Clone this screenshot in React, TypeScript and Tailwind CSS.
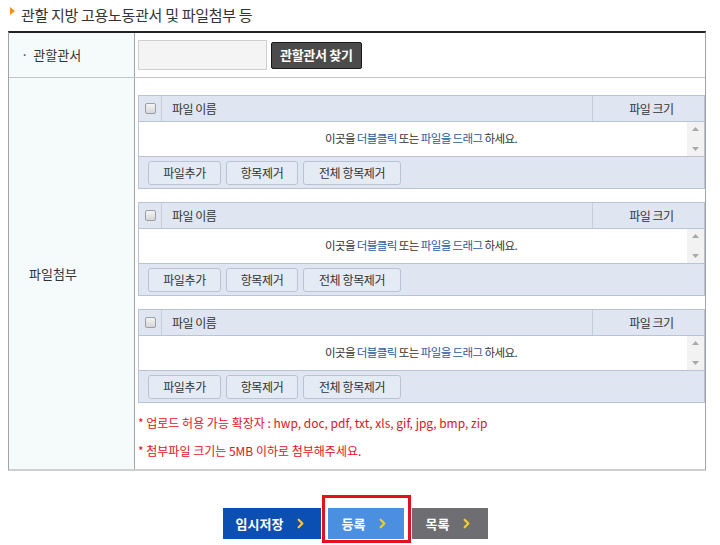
import { ChevronRight } from "lucide-react";

/* ── File box (header / drop area / toolbar) ── */
function FileBox() {
  return (
    <div className="border border-[#b8c4d6]">
      {/* header */}
      <div className="flex h-[26px] bg-[#dfe6f1] border-b border-[#b8c4d6] text-[12px] tracking-[-0.5px]">
        <div className="w-[23px] flex items-center justify-center border-r border-[#c3cddb]">
          <span className="block w-[11px] h-[11px] rounded-[2px] border border-[#9aa0a8] bg-gradient-to-b from-[#f4f4f4] to-[#d6d6d6]" />
        </div>
        <div className="flex-1 flex items-center pl-[10px]">파일 이름</div>
        <div className="w-[112px] flex items-center justify-center border-l border-[#c3cddb] pl-[6px]">파일 크기</div>
      </div>

      {/* drop area */}
      <div className="flex h-[35px] bg-white border-b border-[#b8c4d6]">
        <div className="flex-1 flex items-center justify-center text-[11.5px] tracking-[-0.6px] pl-[16px]">
          이곳을&nbsp;<span className="text-[#1f5aa6]">더블클릭</span>&nbsp;또는&nbsp;
          <span className="text-[#1f5aa6]">파일을 드래그</span>&nbsp;하세요.
        </div>
        <div className="w-[17px] bg-[#f2f2f2] flex flex-col items-center justify-between py-[5px] text-[#a8a8a8]">
          <svg width="7" height="4" viewBox="0 0 7 4"><path d="M0 4 L3.5 0 L7 4 Z" fill="currentColor" /></svg>
          <svg width="7" height="4" viewBox="0 0 7 4"><path d="M0 0 L3.5 4 L7 0 Z" fill="currentColor" /></svg>
        </div>
      </div>

      {/* toolbar */}
      <div className="flex h-[31px] items-center gap-[5px] pl-[9px] bg-[#dfe6f1] text-[12px] tracking-[-0.4px]">
        <button className="h-[24px] w-[73px] rounded-[3px] border border-[#b8c4d6] bg-[#e5ebf4]">파일추가</button>
        <button className="h-[24px] w-[72px] rounded-[3px] border border-[#b8c4d6] bg-[#e5ebf4]">항목제거</button>
        <button className="h-[24px] w-[98px] rounded-[3px] border border-[#b8c4d6] bg-[#e5ebf4]">전체 항목제거</button>
      </div>
    </div>
  );
}

/* ── Bottom action button ── */
function ActionButton({ label, className }: { label: string; className: string }) {
  return (
    <button className={`h-[31px] flex items-center justify-center gap-[10px] text-white font-bold text-[13px] ${className}`}>
      <span>{label}</span>
      <ChevronRight size={15} strokeWidth={3.5} className="text-[#f3c940]" />
    </button>
  );
}

export default function App() {
  return (
    <div className="w-[720px] h-[545px] bg-white text-[#333] font-['Noto_Sans_CJK_KR','Noto_Sans',sans-serif] overflow-hidden">
      {/* title */}
      <div className="flex items-center h-[31px] pl-[10px] pb-[1px]">
        <svg width="5" height="8" viewBox="0 0 5 8" className="mb-[8px] mr-[6px]">
          <path d="M0 0 L5 4 L0 8 Z" fill="#f0901e" />
        </svg>
        <h2 className="text-[15px] leading-none tracking-[-0.3px] mb-[2px]">관할 지방 고용노동관서 및 파일첨부 등</h2>
      </div>

      {/* form table */}
      <div className="ml-[8px] w-[698px] border-t-2 border-t-[#222] border-x border-x-[#a3a3a3] border-b-2 border-b-[#cfcfcf]">
        {/* row: 관할관서 */}
        <div className="flex h-[45px] border-b border-[#c4c4c4]">
          <div className="w-[126px] bg-[#f5fafb] border-r border-[#a3a3a3] flex items-center pl-[12px] text-[13px]">
            <span className="mr-[5px]">·</span>관할관서
          </div>
          <div className="flex-1 flex items-center pl-[3px] gap-[4px]">
            <input className="w-[129px] h-[30px] bg-[#f4f4f4] border border-[#d0d0d0] outline-none" />
            <button className="h-[27px] px-[8px] bg-[#4b4b4b] border border-[#1a1a1a] rounded-[2px] text-white font-bold text-[13px] tracking-[-0.3px]">
              관할관서 찾기
            </button>
          </div>
        </div>

        {/* row: 파일첨부 */}
        <div className="flex h-[391px]">
          <div className="w-[126px] bg-[#f5fafb] border-r border-[#a3a3a3] flex items-center pl-[20px] text-[13px]">
            파일첨부
          </div>
          <div className="flex-1 pl-[3px] pr-0 pt-[17px] flex flex-col">
            <div className="flex flex-col gap-[13px]">
              <FileBox />
              <FileBox />
              <FileBox />
            </div>
            <p className="mt-[11px] text-[12px] text-[#e3101d] leading-[18px]">
              * 업로드 허용 가능 확장자 : hwp, doc, pdf, txt, xls, gif, jpg, bmp, zip
            </p>
            <p className="mt-[10px] text-[12px] text-[#e3101d] leading-[18px]">
              * 첨부파일 크기는 5MB 이하로 첨부해주세요.
            </p>
          </div>
        </div>
      </div>

      {/* actions */}
      <div className="flex items-end pl-[223px] pt-[37px] gap-[7px]">
        <ActionButton label="임시저장" className="w-[98px] bg-[#0c4fb3]" />
        <div className="relative">
          <ActionButton label="등록" className="w-[76px] bg-[#4a8fe0]" />
          <div className="absolute left-[-6px] right-[-7px] top-[-13px] bottom-[-4px] border-[3px] border-[#e5101d] pointer-events-none" />
        </div>
        <ActionButton label="목록" className="w-[76px] ml-[1px] bg-[#6e6e72]" />
      </div>
    </div>
  );
}
